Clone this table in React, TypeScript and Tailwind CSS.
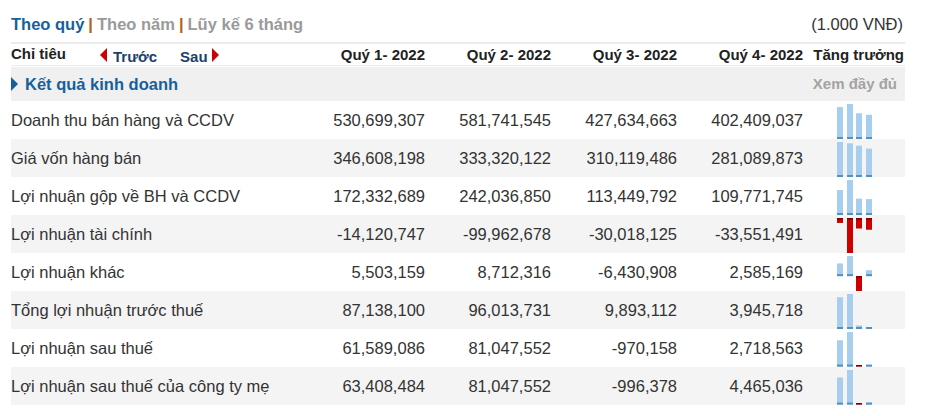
import React from 'react';

type Row = { label: string; values: number[] };

const rows: Row[] = [
  { label: 'Doanh thu bán hàng và CCDV', values: [530699307, 581741545, 427634663, 402409037] },
  { label: 'Giá vốn hàng bán', values: [346608198, 333320122, 310119486, 281089873] },
  { label: 'Lợi nhuận gộp về BH và CCDV', values: [172332689, 242036850, 113449792, 109771745] },
  { label: 'Lợi nhuận tài chính', values: [-14120747, -99962678, -30018125, -33551491] },
  { label: 'Lợi nhuận khác', values: [5503159, 8712316, -6430908, 2585169] },
  { label: 'Tổng lợi nhuận trước thuế', values: [87138100, 96013731, 9893112, 3945718] },
  { label: 'Lợi nhuận sau thuế', values: [61589086, 81047552, -970158, 2718563] },
  { label: 'Lợi nhuận sau thuế của công ty mẹ', values: [63408484, 81047552, -996378, 4465036] },
];

const quarters = ['Quý 1- 2022', 'Quý 2- 2022', 'Quý 3- 2022', 'Quý 4- 2022'];

const fmt = (n: number) => n.toLocaleString('en-US');

// mini bar chart, zero line sits between the tallest positive and deepest negative
const MiniChart = ({ values }: { values: number[] }) => {
  const H = 35;
  const maxPos = Math.max(0, ...values);
  const maxNeg = Math.max(0, ...values.map((v) => -v));
  const range = maxPos + maxNeg || 1;
  const zero = (H * maxPos) / range;
  const xs = [0, 10, 19, 29];

  return (
    <svg width="36" height={H} viewBox={`0 0 36 ${H}`} className="block">
      {values.map((v, i) => {
        const h = (Math.abs(v) * H) / range;
        const x = xs[i];
        if (v >= 0) {
          return (
            <g key={i}>
              <rect x={x} y={zero - h} width="6" height={h} fill="#a7cdef" />
              <rect x={x} y={Math.max(zero - 2, 0)} width="6" height="2" fill="#5391c1" />
            </g>
          );
        }
        const sy = Math.min(zero, H - 2);
        return (
          <g key={i}>
            <rect x={x} y={zero} width="6" height={h} fill="#cc0000" />
            <rect x={x} y={sy} width="6" height="1.5" fill="#7a0000" />
          </g>
        );
      })}
    </svg>
  );
};

const TriLeft = () => (
  <svg width="7" height="14" viewBox="0 0 7 14" className="block">
    <polygon points="7,0 0,7 7,14" fill="#cc0000" />
  </svg>
);

const TriRight = ({ color = '#cc0000' }: { color?: string }) => (
  <svg width="7" height="14" viewBox="0 0 7 14" className="block">
    <polygon points="0,0 7,7 0,14" fill={color} />
  </svg>
);

export default function App() {
  return (
    <div className="min-h-screen bg-white font-['Liberation_Sans',Arial,sans-serif] text-[#333]">
      <div className="ml-[11px] w-[894px]">
        {/* period tabs */}
        <div className="flex h-[42px] items-center justify-between pt-[6px] text-[16.5px] leading-[18px]">
          <div className="flex items-center font-bold">
            <span className="text-[#17609b]">Theo quý</span>
            <span className="mx-[4px] text-[#b0621c]">|</span>
            <span className="text-[#9a9a9a]">Theo năm</span>
            <span className="mx-[4px] text-[#b0621c]">|</span>
            <span className="text-[#9a9a9a]">Lũy kế 6 tháng</span>
          </div>
          <span className="pr-[2px]">(1.000 VNĐ)</span>
        </div>

        {/* header row */}
        <div className="flex h-[24px] items-center border-t-2 border-b border-[#ebebeb] text-[15px] font-bold leading-[17px] text-[#222]">
          <div className="flex w-[288px] items-center">
            <span className="w-[89px] -mt-[3px]">Chỉ tiêu</span>
            <TriLeft />
            <span className="ml-[6px] mt-[4px] text-[#1c3f6e]">Trước</span>
            <span className="ml-[23px] mt-[4px] text-[#1c3f6e]">Sau</span>
            <span className="ml-[4px]">
              <TriRight />
            </span>
          </div>
          {quarters.map((q) => (
            <div key={q} className="w-[126px] text-right">
              {q}
            </div>
          ))}
          <div className="flex-1 pr-px text-right">Tăng trưởng</div>
        </div>

        {/* section */}
        <div className="mt-px flex h-[34px] items-center justify-between bg-[#f0f0f0]">
          <div className="flex items-center gap-[7px] text-[16.5px] font-bold text-[#17609b]">
            <TriRight color="#17609b" />
            <span>Kết quả kinh doanh</span>
          </div>
          <span className="pr-[8px] text-[15px] font-bold text-[#a3a3a3]">Xem đầy đủ</span>
        </div>

        {/* data rows */}
        {rows.map((r, idx) => (
          <div
            key={r.label}
            className={`flex h-[38px] items-stretch text-[16.5px] ${idx % 2 === 1 ? 'bg-[#f4f4f4]' : 'bg-white'}`}
          >
            <div className="flex w-[288px] items-center">{r.label}</div>
            {r.values.map((v, i) => (
              <div key={i} className="flex w-[126px] items-center justify-end">
                {fmt(v)}
              </div>
            ))}
            <div className="flex flex-1 items-end justify-center pl-[1px]">
              <MiniChart values={r.values} />
            </div>
          </div>
        ))}
      </div>
    </div>
  );
}
